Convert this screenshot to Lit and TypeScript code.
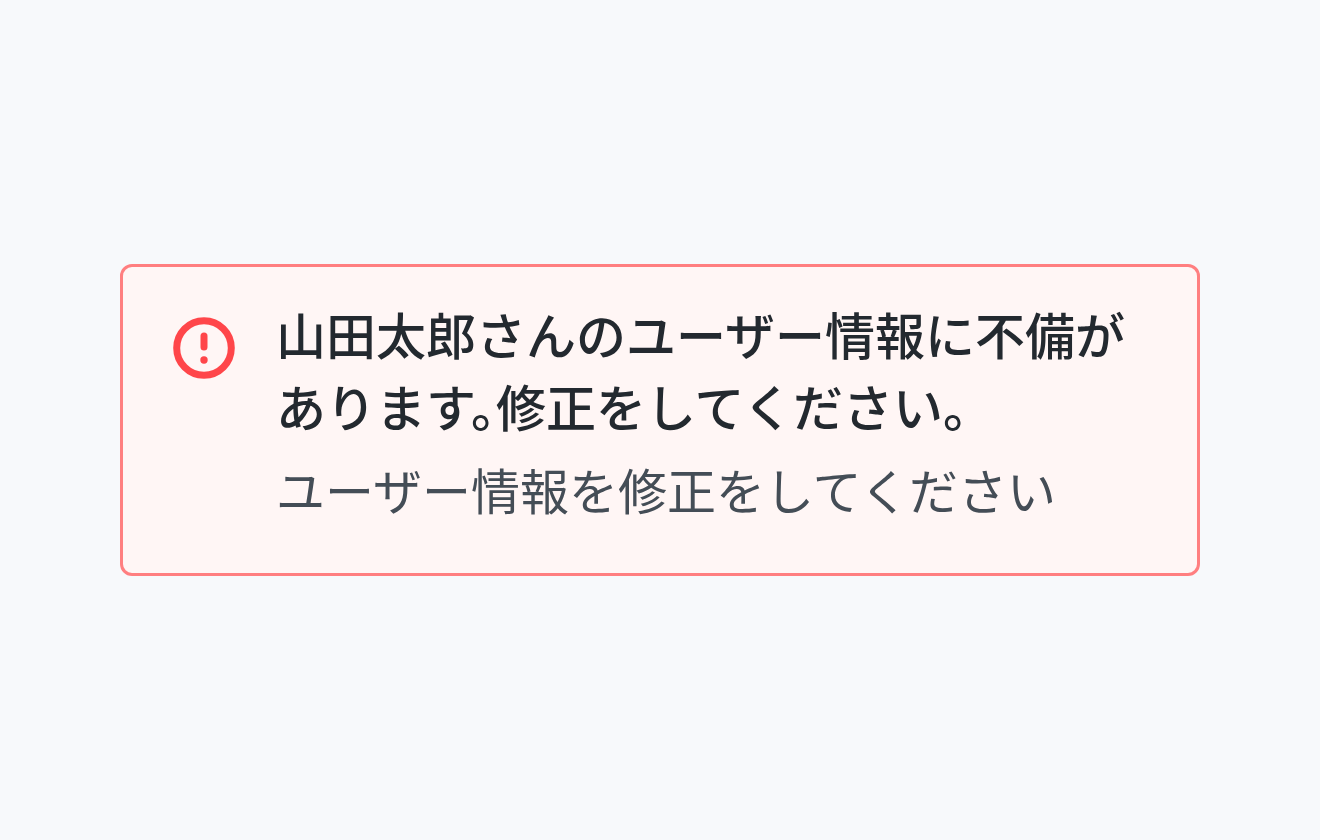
import { LitElement, html, css } from "lit";
import { customElement } from "lit/decorators.js";

@customElement("inline-alert")
class InlineAlert extends LitElement {
  static styles = css`
    :host { display: block; }
    .alert {
      display: flex;
      align-items: flex-start;
      gap: 36px;
      padding: 30px 48px 48px;
      border: 3px solid #ff7f80;
      border-radius: 12px;
      background: #fff6f5;
    }
    .icon { flex: none; width: 72px; height: 72px; margin: 15px 0 0 -3px; }
    .body { flex: 1; min-width: 0; line-height: 72px; }
    .title { margin: 0; font-size: 50px; font-weight: 500; color: #23292f; font-feature-settings: "halt"; }
    .text { margin: 12px 0 0; font-size: 49px; color: #444d56; }
  `;
  render() {
    return html`
      <div class="alert" role="alert">
        <svg class="icon" viewBox="0 0 72 72" fill="none" aria-hidden="true">
          <circle cx="36" cy="36" r="27.3" stroke="#ff464a" stroke-width="7" />
          <path d="M36 24v11" stroke="#ff464a" stroke-width="7" stroke-linecap="round" />
          <circle cx="36" cy="48" r="3.7" fill="#ff464a" />
        </svg>
        <div class="body">
          <h2 class="title">山田太郎さんのユーザー情報に不備があります。修正をしてください。</h2>
          <p class="text">ユーザー情報を修正をしてください</p>
        </div>
      </div>
    `;
  }
}

@customElement("app-root")
class AppRoot extends LitElement {
  static styles = css`
    :host {
      display: flex;
      flex-direction: column;
      justify-content: center;
      box-sizing: border-box;
      min-height: 100vh;
      padding: 24px 120px;
      background: #f7f9fb;
      font-family: "Noto Sans CJK JP", sans-serif;
    }
  `;
  render() {
    return html`<inline-alert lang="ja"></inline-alert>`;
  }
}
